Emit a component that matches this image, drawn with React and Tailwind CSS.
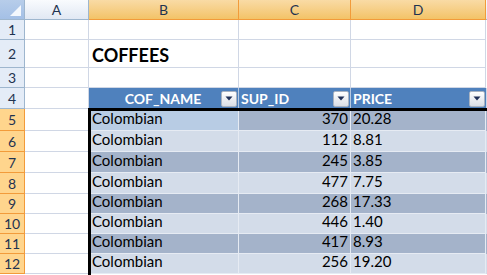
import React from 'react';

const rows = [
  ['Colombian', '370', '20.28'],
  ['Colombian', '112', '8.81'],
  ['Colombian', '245', '3.85'],
  ['Colombian', '477', '7.75'],
  ['Colombian', '268', '17.33'],
  ['Colombian', '446', '1.40'],
  ['Colombian', '417', '8.93'],
  ['Colombian', '256', '19.20'],
];

const rowHeights = ['h-[22px]', 'h-[21px]', 'h-[21px]', 'h-[21px]', 'h-[20px]', 'h-[20px]', 'h-[20px]', 'h-[20px]'];

const FilterButton = () => (
  <div className="w-[16px] h-[16px] border border-[#a9b3c1] rounded-[2px] bg-gradient-to-b from-white to-[#d9dee6] flex items-center justify-center shrink-0">
    <svg width="8" height="5" viewBox="0 0 8 5">
      <path d="M0.5 0.5 L7.5 0.5 L4 4.5 Z" fill="#1f2f57" />
    </svg>
  </div>
);

const ColHead = ({ label, selected, w }) => (
  <div
    className={`${w} h-[20px] flex items-center justify-center border-r border-b text-[14px] ${
      selected
        ? 'bg-gradient-to-b from-[#f9dba5] to-[#f3c366] border-r-[#f29b3a] border-b-[#f29b3a] text-[#1f3350]'
        : 'bg-gradient-to-b from-[#f9fbfe] to-[#e1e8f3] border-r-[#9eb6ce] border-b-[#9eb6ce] text-[#1f3350]'
    }`}
  >
    {label}
  </div>
);

const RowHead = ({ n, selected, h }) => (
  <div
    className={`w-[25px] ${h} flex items-center justify-center border-r border-b text-[14px] text-[#1f3350] shrink-0 ${
      selected ? 'bg-[#ffd58d] border-r-[#f29b3a] border-b-[#f29b3a]' : 'bg-[#e4ecf7] border-r-[#9eb6ce] border-b-[#9eb6ce]'
    }`}
  >
    {n}
  </div>
);

const Cell = ({ w, h, children, className = '' }) => (
  <div className={`${w} ${h} border-r border-b border-[#d0d7e5] shrink-0 ${className}`}>{children}</div>
);

export default function App() {
  return (
    <div className="relative w-[487px] h-[275px] overflow-hidden bg-white" style={{ fontFamily: 'Lato, "Open Sans", sans-serif' }}>
      {/* column headers */}
      <div className="flex">
        <div className="w-[25px] h-[20px] border-r border-b border-[#9eb6ce] bg-gradient-to-b from-[#b7cdea] to-[#a4c0e6] flex items-end justify-end p-[3px] shrink-0">
          <svg width="11" height="11" viewBox="0 0 11 11">
            <path d="M11 0 L11 11 L0 11 Z" fill="#f4f8fd" />
          </svg>
        </div>
        <ColHead label="A" w="w-[64px]" />
        <ColHead label="B" w="w-[150px]" selected />
        <ColHead label="C" w="w-[112px]" selected />
        <ColHead label="D" w="w-[135px]" selected />
        <div className="flex-1 h-[20px] border-b border-[#9eb6ce] bg-gradient-to-b from-[#f9fbfe] to-[#e1e8f3]" />
      </div>

      {/* row 1 */}
      <div className="flex">
        <RowHead n="1" h="h-[20px]" />
        <Cell w="w-[64px]" h="h-[20px]" />
        <Cell w="w-[150px]" h="h-[20px]" />
        <Cell w="w-[112px]" h="h-[20px]" />
        <Cell w="w-[135px]" h="h-[20px]" />
      </div>

      {/* row 2 */}
      <div className="flex">
        <RowHead n="2" h="h-[28px]" />
        <Cell w="w-[64px]" h="h-[28px]" />
        <Cell w="w-[150px]" h="h-[28px]" className="flex items-end pl-[3px] pb-[2px]">
          <span className="text-[18px] font-bold text-black leading-none mb-[1px]">COFFEES</span>
        </Cell>
        <Cell w="w-[112px]" h="h-[28px]" />
        <Cell w="w-[135px]" h="h-[28px]" />
      </div>

      {/* row 3 */}
      <div className="flex">
        <RowHead n="3" h="h-[20px]" />
        <Cell w="w-[64px]" h="h-[20px]" />
        <Cell w="w-[150px]" h="h-[20px]" />
        <Cell w="w-[112px]" h="h-[20px]" />
        <Cell w="w-[135px]" h="h-[20px]" />
      </div>

      {/* row 4: table header */}
      <div className="flex">
        <RowHead n="4" h="h-[21px]" />
        <Cell w="w-[64px]" h="h-[21px]" />
        <div className="w-[150px] h-[21px] bg-[#4f81bd] border-r border-[#b7c9e0] flex items-center shrink-0 pr-[1px]">
          <span className="flex-1 text-center text-white font-bold text-[14px] pl-[16px]">COF_NAME</span>
          <FilterButton />
        </div>
        <div className="w-[112px] h-[21px] bg-[#4f81bd] border-r border-[#b7c9e0] flex items-center shrink-0 pl-[2px] pr-[1px]">
          <span className="flex-1 text-white font-bold text-[14px]">SUP_ID</span>
          <FilterButton />
        </div>
        <div className="w-[135px] h-[21px] bg-[#4f81bd] flex items-center shrink-0 pl-[2px] pr-[1px]">
          <span className="flex-1 text-white font-bold text-[14px]">PRICE</span>
          <FilterButton />
        </div>
        <div className="flex-1 h-[21px] border-l border-[#d0d7e5]" />
      </div>

      {/* data rows */}
      {rows.map(([name, id, price], i) => {
        const dark = i % 2 === 0;
        const h = rowHeights[i];
        const bg = dark ? 'bg-[#a4b3ca]' : 'bg-[#d3dce9]';
        return (
          <div className="flex" key={i}>
            <RowHead n={String(i + 5)} h={h} selected />
            <Cell w="w-[64px]" h={h} />
            <div
              className={`w-[150px] ${h} ${i === 0 ? 'bg-[#b8cce4]' : bg} border-r border-b border-[#e6ebf3] flex items-end pl-[3px] pb-[1px] text-[15px] text-black shrink-0`}
            >
              {name}
            </div>
            <div className={`w-[112px] ${h} ${bg} border-r border-b border-[#e6ebf3] flex items-end justify-end pr-[2px] pb-[1px] text-[15px] text-black shrink-0`}>
              {id}
            </div>
            <div className={`w-[135px] ${h} ${bg} border-r border-b border-[#e6ebf3] flex items-end pl-[2px] pb-[1px] text-[15px] text-black shrink-0`}>
              {price}
            </div>
            <div className={`flex-1 ${h} ${bg}`} />
          </div>
        );
      })}

      {/* selection border */}
      <div className="absolute left-[88px] top-[108px] w-[420px] h-[200px] border-[3px] border-black pointer-events-none" />
    </div>
  );
}
